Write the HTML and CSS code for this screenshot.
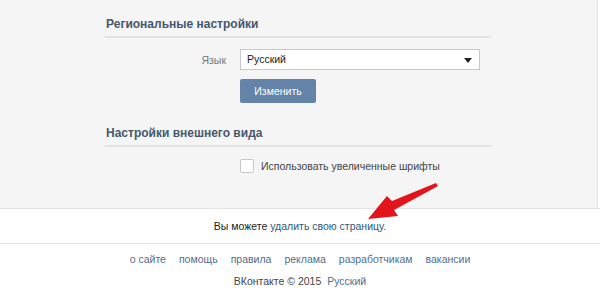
FILE: index.html
```html
<!DOCTYPE html>
<html lang="ru">
<head>
    <meta charset="UTF-8">
    <title>Настройки</title>
    <link rel="stylesheet" href="styles.css">
</head>
<body>
    <div class="page">
        <div class="panel">
            <div class="section">
                <h2 class="section-title">Региональные настройки</h2>
                <div class="row">
                    <div class="label">Язык</div>
                    <div class="select">Русский<span class="caret"></span></div>
                </div>
                <div class="row">
                    <div class="label"></div>
                    <button class="btn" type="button">Изменить</button>
                </div>
            </div>
            <div class="section second">
                <h2 class="section-title">Настройки внешнего вида</h2>
                <div class="row">
                    <div class="label"></div>
                    <label class="check"><span class="box"></span>Использовать увеличенные шрифты</label>
                </div>
            </div>
        </div>
        <div class="delete-bar">Вы можете <a href="#">удалить свою страницу.</a></div>
        <div class="footer">
            <div class="footer-links">
                <a href="#">о сайте</a>
                <a href="#">помощь</a>
                <a href="#">правила</a>
                <a href="#">реклама</a>
                <a href="#">разработчикам</a>
                <a href="#">вакансии</a>
            </div>
            <div class="copy">ВКонтакте © 2015 <a href="#">Русский</a></div>
        </div>
        <!-- red arrow pointing at the delete link -->
        <svg class="arrow" width="90" height="50" viewBox="0 0 90 50">
            <path d="M86 6 L84 3 L40 21 L35 16 L16 39 L46 36 L42 30 Z" fill="#e3141b"/>
        </svg>
    </div>
</body>
</html>
```

FILE: styles.css
```css
body {
    margin: 0;
    background: #fff;
    font-family: "Liberation Sans", Arial, sans-serif;
    font-size: 10.5px;
    color: #000;
}
a {
    color: #2b587a;
    text-decoration: none;
}
.page {
    position: relative;
    width: 600px;
    height: 291px;
    overflow: hidden;
}
.panel {
    width: 598px;
    height: 208px;
    box-sizing: border-box;
    background: #f5f5f5;
    border-right: 1px solid #e2e2e2;
    padding: 16px 0 0 105px;
}
.section {
    width: 386px;
}
.section.second {
    margin-top: 22px;
}
.section-title {
    margin: 0 0 11px;
    padding: 0 0 4px 1px;
    font-size: 12px;
    font-weight: bold;
    color: #45586e;
    border-bottom: 2px solid #e1e3e6;
    line-height: 16px;
}
.row {
    display: flex;
    align-items: center;
    margin-bottom: 9px;
}
.label {
    width: 121px;
    margin-right: 14px;
    text-align: right;
    color: #777;
    flex-shrink: 0;
}
.select {
    position: relative;
    width: 232px;
    height: 19px;
    line-height: 19px;
    padding-left: 6px;
    box-sizing: content-box;
    background: #fff;
    border: 1px solid #c5c9cf;
    color: #222;
}
.caret {
    position: absolute;
    right: 7px;
    top: 8px;
    border-left: 4px solid transparent;
    border-right: 4px solid transparent;
    border-top: 5px solid #222;
}
.btn {
    width: 76px;
    height: 24px;
    border: none;
    border-radius: 2px;
    background: #6383a8;
    color: #fff;
    font-family: inherit;
    font-size: 10.5px;
    padding: 0;
}
.check {
    display: flex;
    align-items: center;
    color: #444;
    margin-top: 1px;
}
.box {
    width: 12px;
    height: 12px;
    margin-right: 7px;
    background: #fff;
    border: 1px solid #c8c8c8;
    border-radius: 2px;
}
.delete-bar {
    height: 34px;
    line-height: 34px;
    text-align: center;
    border-top: 1px solid #e4e4e4;
    border-bottom: 1px solid #e4e4e4;
    color: #222;
}
.footer {
    text-align: center;
    padding-top: 7px;
}
.footer-links {
    display: flex;
    justify-content: center;
    gap: 13px;
    line-height: 16px;
}
.footer-links a {
    color: #4f6f91;
}
.copy {
    margin-top: 6px;
    line-height: 16px;
    color: #444;
}
.copy a {
    color: #4f6f91;
    margin-left: 3px;
}
.arrow {
    position: absolute;
    left: 352px;
    top: 180px;
}
```
